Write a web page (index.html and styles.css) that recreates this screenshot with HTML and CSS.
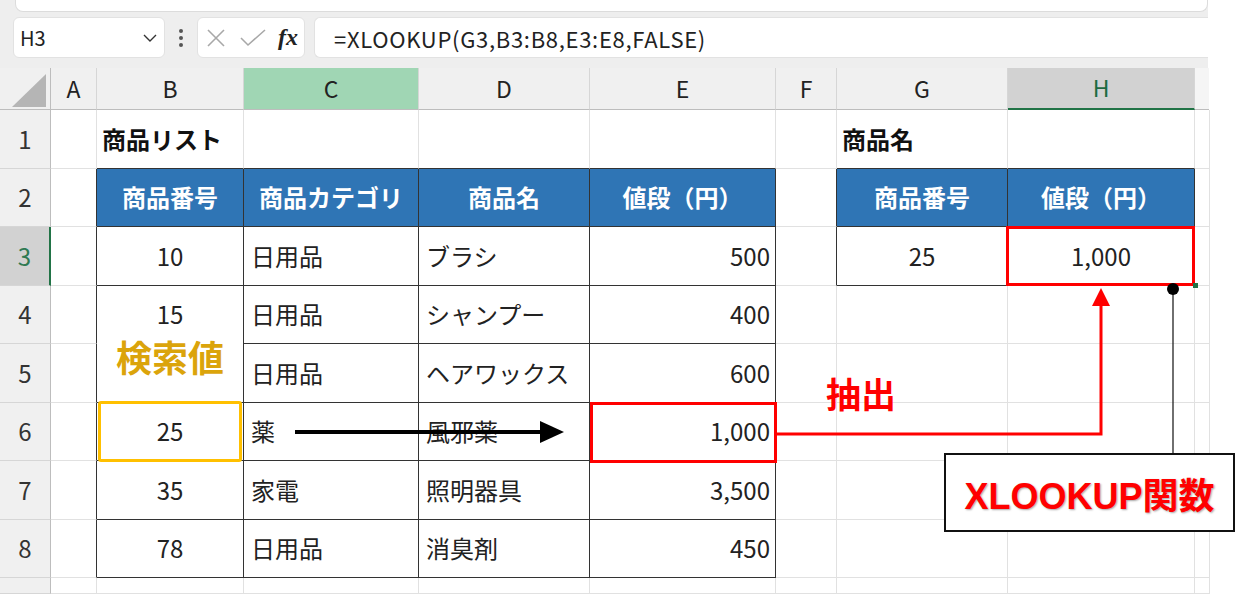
FILE: index.html
```html
<!DOCTYPE html>
<html lang="ja">

<head>
    <meta charset="UTF-8">
    <meta name="viewport" content="width=device-width, initial-scale=1.0">
    <title>XLOOKUP関数</title>
    <link rel="stylesheet" href="styles.css">
</head>

<body>
    <div class="app">
        <div class="ribbon-edge">
            <div class="ribbon-bar"></div>
        </div>

        <!-- 数式バー -->
        <div class="formula-bar">
            <div class="name-box">
                <span>H3</span>
                <svg width="14" height="8" viewBox="0 0 14 8"><polyline points="1,1 7,7 13,1" fill="none" stroke="#333" stroke-width="1.4" /></svg>
            </div>
            <div class="grip">
                <svg width="6" height="20" viewBox="0 0 6 20"><circle cx="3" cy="3" r="2" fill="#555" /><circle cx="3" cy="10" r="2" fill="#555" /><circle cx="3" cy="17" r="2" fill="#555" /></svg>
            </div>
            <div class="fx-box">
                <svg width="20" height="18" viewBox="0 0 20 18"><path d="M2 1 L18 17 M18 1 L2 17" stroke="#a8a8a8" stroke-width="1.6" fill="none" /></svg>
                <svg width="26" height="18" viewBox="0 0 26 18"><polyline points="1,9 8,16 25,1" stroke="#a8a8a8" stroke-width="1.6" fill="none" /></svg>
                <span class="fx">fx</span>
            </div>
            <div class="formula-input">=XLOOKUP(G3,B3:B8,E3:E8,FALSE)</div>
        </div>

        <!-- シート -->
        <div class="sheet">
            <div class="c ch corner">
                <svg width="36" height="36" viewBox="0 0 36 36"><polygon points="1,34 35,34 35,1" fill="#b5b5b5" /></svg>
            </div>
            <div class="c ch">A</div>
            <div class="c ch">B</div>
            <div class="c ch col-sel">C</div>
            <div class="c ch">D</div>
            <div class="c ch">E</div>
            <div class="c ch">F</div>
            <div class="c ch">G</div>
            <div class="c ch col-active">H</div>
            <div class="c ch last"></div>

            <!-- 1 -->
            <div class="c rh">1</div>
            <div class="c"></div>
            <div class="c bb title">商品リスト</div>
            <div class="c bb"></div>
            <div class="c bb"></div>
            <div class="c bb"></div>
            <div class="c"></div>
            <div class="c bb title">商品名</div>
            <div class="c bb"></div>
            <div class="c"></div>

            <!-- 2 -->
            <div class="c rh">2</div>
            <div class="c rb"></div>
            <div class="c t th">商品番号</div>
            <div class="c t th">商品カテゴリ</div>
            <div class="c t th">商品名</div>
            <div class="c t th">値段（円）</div>
            <div class="c rb"></div>
            <div class="c t th">商品番号</div>
            <div class="c t th">値段（円）</div>
            <div class="c"></div>

            <!-- 3 -->
            <div class="c rh row-active">3</div>
            <div class="c rb"></div>
            <div class="c t num">10</div>
            <div class="c t">日用品</div>
            <div class="c t">ブラシ</div>
            <div class="c t price">500</div>
            <div class="c rb"></div>
            <div class="c t num">25</div>
            <div class="c t num">1,000</div>
            <div class="c"></div>

            <!-- 4 -->
            <div class="c rh">4</div>
            <div class="c rb"></div>
            <div class="c t num">15</div>
            <div class="c t">日用品</div>
            <div class="c t">シャンプー</div>
            <div class="c t price">400</div>
            <div class="c"></div>
            <div class="c"></div>
            <div class="c"></div>
            <div class="c"></div>

            <!-- 5 -->
            <div class="c rh">5</div>
            <div class="c rb"></div>
            <div class="c t num"></div>
            <div class="c t">日用品</div>
            <div class="c t">ヘアワックス</div>
            <div class="c t price">600</div>
            <div class="c"></div>
            <div class="c"></div>
            <div class="c"></div>
            <div class="c"></div>

            <!-- 6 -->
            <div class="c rh">6</div>
            <div class="c rb"></div>
            <div class="c t num">25</div>
            <div class="c t">薬</div>
            <div class="c t">風邪薬</div>
            <div class="c t price">1,000</div>
            <div class="c"></div>
            <div class="c"></div>
            <div class="c"></div>
            <div class="c"></div>

            <!-- 7 -->
            <div class="c rh">7</div>
            <div class="c rb"></div>
            <div class="c t num">35</div>
            <div class="c t">家電</div>
            <div class="c t">照明器具</div>
            <div class="c t price">3,500</div>
            <div class="c"></div>
            <div class="c"></div>
            <div class="c"></div>
            <div class="c"></div>

            <!-- 8 -->
            <div class="c rh">8</div>
            <div class="c rb"></div>
            <div class="c t num">78</div>
            <div class="c t">日用品</div>
            <div class="c t">消臭剤</div>
            <div class="c t price">450</div>
            <div class="c"></div>
            <div class="c"></div>
            <div class="c"></div>
            <div class="c"></div>

            <!-- 9 -->
            <div class="c rh"></div>
            <div class="c"></div>
            <div class="c"></div>
            <div class="c"></div>
            <div class="c"></div>
            <div class="c"></div>
            <div class="c"></div>
            <div class="c"></div>
            <div class="c"></div>
            <div class="c"></div>
        </div>

        <!-- 説明の図形 -->
        <div class="label-search">検索値</div>
        <div class="mark mark-gold mark-b6"></div>
        <div class="mark mark-red mark-e6"></div>
        <div class="mark mark-red mark-h3"></div>
        <div class="fill-handle"></div>

        <svg class="arrows" width="1240" height="594" viewBox="0 0 1240 594">
            <line x1="295" y1="432" x2="544" y2="432" stroke="#000" stroke-width="4" />
            <polygon points="540,421 564,432 540,443" fill="#000" />
            <polyline points="777,434 1101,434 1101,302" fill="none" stroke="#f00" stroke-width="3" />
            <polygon points="1092,306 1101,288 1110,306" fill="#f00" />
            <line x1="1173" y1="289" x2="1173" y2="454" stroke="#222" stroke-width="1.3" />
            <circle cx="1173" cy="289" r="6" fill="#000" />
        </svg>

        <div class="label-extract">抽出</div>
        <div class="callout">XLOOKUP関数</div>
    </div>
</body>

</html>
```

FILE: styles.css
```css
* {
    box-sizing: border-box;
}

body {
    margin: 0;
    background: #fff;
    font-family: "Noto Sans CJK JP", "Noto Sans", sans-serif;
    color: #222;
}

.app {
    position: relative;
    width: 1208px;
    height: 594px;
}

/* 上のリボンの端 */
.ribbon-edge {
    height: 14px;
    background: #eeeeee;
    padding-left: 15px;
}

.ribbon-bar {
    height: 12px;
    background: #fff;
    border: 1px solid #dcdcdc;
    border-top: none;
    border-radius: 0 0 8px 8px;
}

/* 数式バー */
.formula-bar {
    height: 54px;
    background: #eeeeee;
    display: flex;
    align-items: flex-start;
    padding: 3px 0 0 13px;
}

.name-box,
.fx-box,
.formula-input {
    height: 41px;
    background: #fff;
    border: 1px solid #e2e2e2;
    border-radius: 6px;
    display: flex;
    align-items: center;
}

.name-box {
    width: 152px;
    justify-content: space-between;
    padding: 0 7px 0 6px;
    font-size: 20px;
}

.grip {
    width: 32px;
    height: 41px;
    display: flex;
    align-items: center;
    justify-content: center;
}

.fx-box {
    width: 108px;
    padding: 0 0 0 8px;
    gap: 14px;
}

.fx {
    font-family: "Liberation Serif", serif;
    font-style: italic;
    font-weight: bold;
    font-size: 24px;
    color: #222;
    margin-left: -2px;
}

.formula-input {
    flex: 1;
    margin-left: 9px;
    padding-left: 19px;
    font-size: 22px;
    letter-spacing: 0.7px;
    color: #222;
    border-right: none;
    border-radius: 6px 0 0 6px;
}

/* シート */
.sheet {
    display: grid;
    grid-template-columns: 51px 46px 147px 175px 171px 186px 61px 171px 187px 13px;
    grid-template-rows: 42px 59px 58px 59px 58px 59px 58px 59px 58px 16px;
    background: #fff;
}

.c {
    border-right: 1px solid #e1e1e1;
    border-bottom: 1px solid #e1e1e1;
    display: flex;
    align-items: center;
    padding: 0 7px;
    font-size: 24px;
    line-height: 1.2;
    white-space: nowrap;
    overflow: hidden;
}

.ch {
    background: #f0f0f0;
    justify-content: center;
    font-size: 23px;
    border-right-color: #d6d6d6;
    border-bottom-color: #bdbdbd;
}

.corner {
    padding: 0 3px 0 0;
    justify-content: flex-end;
    align-items: flex-end;
    border-right-color: #bdbdbd;
}

.col-sel {
    background: #a0d6b4;
}

.col-active {
    background: #d2d2d2;
    color: #1e6b41;
    border-bottom: 2px solid #217346;
}

.ch.last {
    background: #f5f5f5;
    border-right: none;
}

.rh {
    background: #f0f0f0;
    justify-content: center;
    font-size: 24px;
    color: #333;
    border-right-color: #bdbdbd;
    border-bottom-color: #d6d6d6;
}

.row-active {
    background: #d2d2d2;
    color: #2f7a52;
    border-right: 2px solid #217346;
}

/* 表の罫線 */
.t {
    border-right-color: #333;
    border-bottom-color: #333;
}

.rb {
    border-right-color: #333;
}

.bb {
    border-bottom-color: #333;
}

.title {
    font-weight: bold;
    padding-left: 5px;
    color: #111;
}

.th {
    background: #2f75b5;
    color: #fff;
    font-weight: bold;
    justify-content: center;
}

.num {
    justify-content: center;
}

.price {
    justify-content: flex-end;
    padding-right: 5px;
}

/* 図形 */
.label-search {
    position: absolute;
    left: 97px;
    top: 326px;
    width: 146px;
    height: 60px;
    background: #fff;
    display: flex;
    align-items: center;
    justify-content: center;
    font-size: 36px;
    font-weight: bold;
    color: #dba40b;
}

.mark {
    position: absolute;
    border: 3px solid;
}

.mark-gold {
    border-color: #ffc000;
    border-radius: 3px;
}

.mark-red {
    border-color: #ff0000;
}

.mark-b6 {
    left: 98px;
    top: 401px;
    width: 144px;
    height: 61px;
}

.mark-e6 {
    left: 590px;
    top: 402px;
    width: 187px;
    height: 61px;
}

.mark-h3 {
    left: 1006px;
    top: 226px;
    width: 189px;
    height: 60px;
}

.fill-handle {
    position: absolute;
    left: 1193px;
    top: 283px;
    width: 5px;
    height: 5px;
    background: #217346;
}

.arrows {
    position: absolute;
    left: 0;
    top: 0;
    pointer-events: none;
}

.label-extract {
    position: absolute;
    left: 826px;
    top: 372px;
    font-size: 35px;
    font-weight: bold;
    color: #ff0000;
    line-height: 1.2;
}

.callout {
    position: absolute;
    left: 944px;
    top: 453px;
    width: 291px;
    height: 79px;
    background: #fff;
    border: 2px solid #111;
    display: flex;
    align-items: center;
    justify-content: center;
    font-family: "Liberation Sans", "Noto Sans CJK JP", sans-serif;
    font-size: 36px;
    font-weight: bold;
    color: #ff0000;
    text-shadow: 1px 1px 2px rgba(0, 0, 0, 0.35);
}
```
